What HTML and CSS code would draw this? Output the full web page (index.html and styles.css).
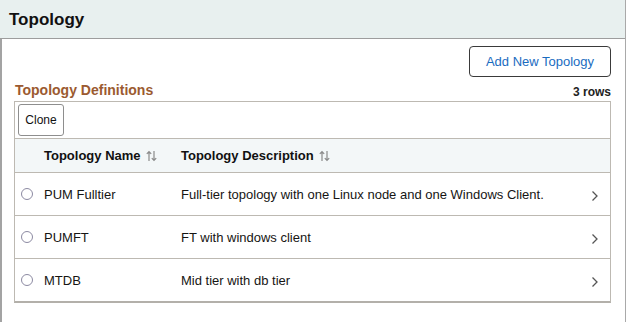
FILE: index.html
```html
<!DOCTYPE html>
<html>
<head>
<meta charset="utf-8">
<link rel="stylesheet" href="styles.css">
</head>
<body>
<div class="panel">
  <div class="panel-header"><h1 class="title">Topology</h1></div>
  <div class="panel-body">
    <div class="actions"><button class="btn-primary">Add New Topology</button></div>
    <div class="grid-head">
      <span class="grid-title">Topology Definitions</span>
      <span class="grid-count">3 rows</span>
    </div>
    <div class="grid">
      <div class="toolbar"><button class="btn-small">Clone</button></div>
      <div class="row head">
        <div></div>
        <div class="cell">Topology Name <svg class="sort" width="11" height="12" viewBox="0 0 11 12"><path d="M3 11V1.5M0.8 3.8L3 1.5 5.2 3.8M8 1v9.5M5.8 8.2L8 10.5 10.2 8.2" fill="none" stroke="#8a8a8a" stroke-width="1.2"/></svg></div>
        <div class="cell">Topology Description <svg class="sort" width="11" height="12" viewBox="0 0 11 12"><path d="M3 11V1.5M0.8 3.8L3 1.5 5.2 3.8M8 1v9.5M5.8 8.2L8 10.5 10.2 8.2" fill="none" stroke="#8a8a8a" stroke-width="1.2"/></svg></div>
        <div></div>
      </div>
      <div class="row">
        <div class="radio-cell"><span class="radio"></span></div>
        <div class="cell">PUM Fulltier</div>
        <div class="cell">Full-tier topology with one Linux node and one Windows Client.</div>
        <div class="chev-cell"><svg width="8" height="12" viewBox="0 0 8 12"><path d="M1.5 1.5L6 6 1.5 10.5" fill="none" stroke="#555" stroke-width="1.3"/></svg></div>
      </div>
      <div class="row">
        <div class="radio-cell"><span class="radio"></span></div>
        <div class="cell">PUMFT</div>
        <div class="cell">FT with windows client</div>
        <div class="chev-cell"><svg width="8" height="12" viewBox="0 0 8 12"><path d="M1.5 1.5L6 6 1.5 10.5" fill="none" stroke="#555" stroke-width="1.3"/></svg></div>
      </div>
      <div class="row last">
        <div class="radio-cell"><span class="radio"></span></div>
        <div class="cell">MTDB</div>
        <div class="cell">Mid tier with db tier</div>
        <div class="chev-cell"><svg width="8" height="12" viewBox="0 0 8 12"><path d="M1.5 1.5L6 6 1.5 10.5" fill="none" stroke="#555" stroke-width="1.3"/></svg></div>
      </div>
    </div>
  </div>
</div>
</body>
</html>
```
FILE: styles.css
```css
* { box-sizing: border-box; }
html, body { margin: 0; background: #fff; }
body { font-family: "Liberation Sans", Arial, sans-serif; color: #161513; }

.panel {
  width: 626px;
  height: 322px;
  border-right: 1px solid #a9a9a9;
  display: flex;
  flex-direction: column;
}
.panel-header {
  height: 39px;
  background: #e8f0ef;
  border-bottom: 1px solid #9d9d9d;
  display: flex;
  align-items: center;
  padding-left: 9px;
}
.title {
  margin: 0;
  font-size: 17px;
  font-weight: bold;
  color: #111;
  padding-top: 1px;
}
.panel-body {
  flex: 1;
  border-left: 2px solid #a3a3a3;
  padding: 7px 14px 0 12px;
}
.actions {
  display: flex;
  justify-content: flex-end;
}
.btn-primary {
  width: 142px;
  height: 31px;
  background: #fff;
  border: 1px solid #3a3a3a;
  border-radius: 4px;
  font-family: inherit;
  font-size: 13px;
  color: #1a6cbf;
  padding: 0;
}
.grid-head {
  height: 24px;
  display: flex;
  justify-content: space-between;
  align-items: flex-end;
  padding: 0 0 2px 1px;
}
.grid-title {
  font-size: 14px;
  font-weight: bold;
  color: #9b5a30;
  line-height: 16px;
  margin-bottom: 1px;
}
.grid-count {
  font-size: 12px;
  font-weight: bold;
  color: #222;
  line-height: 14px;
}
.grid {
  border: 1px solid #bdb9b2;
  border-bottom: 2px solid #b3b0aa;
}
.toolbar {
  height: 37px;
  padding: 2px 3px;
  border-bottom: 1px solid #bdb9b2;
}
.btn-small {
  height: 32px;
  width: 46px;
  background: #fff;
  border: 1px solid #8e8e8e;
  border-radius: 3px;
  font-family: inherit;
  font-size: 12px;
  color: #111;
  padding: 0;
}
.row {
  display: grid;
  grid-template-columns: 29px 137px 1fr 30px;
  height: 43px;
  align-items: center;
  border-bottom: 1px solid #bdb9b2;
  font-size: 13px;
}
.row.last { border-bottom: none; height: 42px; }
.row.head {
  background: #f3f7f8;
  height: 34px;
  font-size: 13px;
  font-weight: bold;
  color: #111;
}
.cell {
  display: flex;
  align-items: center;
  white-space: nowrap;
}
.sort { margin-left: 5px; }
.radio-cell {
  display: flex;
  justify-content: flex-start;
  padding-left: 6px;
}
.radio {
  width: 12px;
  height: 12px;
  border: 1px solid #8c8aa2;
  border-radius: 50%;
  background: #fff;
}
.chev-cell {
  display: flex;
  justify-content: center;
  padding-top: 3px;
}
```
